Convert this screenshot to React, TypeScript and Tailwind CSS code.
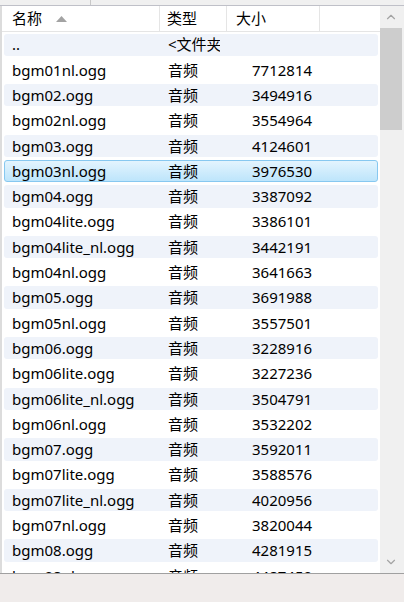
import { ChevronUp, ChevronDown } from 'lucide-react'

interface FileRow {
  name: string
  type: string
  size: string
}

const files: FileRow[] = [
  { name: '..', type: '<文件夹>', size: '' },
  { name: 'bgm01nl.ogg', type: '音频', size: '7712814' },
  { name: 'bgm02.ogg', type: '音频', size: '3494916' },
  { name: 'bgm02nl.ogg', type: '音频', size: '3554964' },
  { name: 'bgm03.ogg', type: '音频', size: '4124601' },
  { name: 'bgm03nl.ogg', type: '音频', size: '3976530' },
  { name: 'bgm04.ogg', type: '音频', size: '3387092' },
  { name: 'bgm04lite.ogg', type: '音频', size: '3386101' },
  { name: 'bgm04lite_nl.ogg', type: '音频', size: '3442191' },
  { name: 'bgm04nl.ogg', type: '音频', size: '3641663' },
  { name: 'bgm05.ogg', type: '音频', size: '3691988' },
  { name: 'bgm05nl.ogg', type: '音频', size: '3557501' },
  { name: 'bgm06.ogg', type: '音频', size: '3228916' },
  { name: 'bgm06lite.ogg', type: '音频', size: '3227236' },
  { name: 'bgm06lite_nl.ogg', type: '音频', size: '3504791' },
  { name: 'bgm06nl.ogg', type: '音频', size: '3532202' },
  { name: 'bgm07.ogg', type: '音频', size: '3592011' },
  { name: 'bgm07lite.ogg', type: '音频', size: '3588576' },
  { name: 'bgm07lite_nl.ogg', type: '音频', size: '4020956' },
  { name: 'bgm07nl.ogg', type: '音频', size: '3820044' },
  { name: 'bgm08.ogg', type: '音频', size: '4281915' },
  { name: 'bgm08nl.ogg', type: '音频', size: '4487450' },
]

const SELECTED = 5

const Row = ({ file, index }: { file: FileRow; index: number }) => {
  const selected = index === SELECTED
  const tinted = index % 2 === 0

  return (
    <div className="h-[25.3px] shrink-0 py-[1.5px] pl-[2px] pr-[2px]">
      <div
        className={`
          h-full flex items-center rounded-[3px] text-[15px] text-black
          ${selected
            ? 'bg-gradient-to-b from-[#e3f4fe] to-[#bde5fb] border border-[#87c8f0]'
            : tinted
              ? 'bg-[#eff3fa] border border-transparent'
              : 'border border-transparent'}
        `}
      >
        <div className="w-[157px] pl-[7px] whitespace-nowrap overflow-hidden">{file.name}</div>
        <div className="w-[58px] pl-[6px] whitespace-nowrap overflow-hidden">{file.type}</div>
        <div className="pl-[32px] whitespace-nowrap">{file.size}</div>
      </div>
    </div>
  )
}

export default function App() {
  return (
    <div
      className="w-[404px] h-[602px] flex flex-col overflow-hidden bg-white"
      style={{ fontFamily: '"Noto Sans", "Noto Sans CJK SC", sans-serif' }}
    >
      {/* top strip */}
      <div className="h-[6px] shrink-0 flex bg-[#f0f0f0] border-b border-[#bfc0c8]">
        <div className="w-[91px] border-r border-[#c8c8c8]" />
      </div>

      <div className="flex-1 flex min-h-0 border-l-2 border-[#dcdcdc]">
        {/* list */}
        <div className="w-[378px] flex flex-col min-h-0">
          {/* header */}
          <div className="h-[26px] shrink-0 flex items-stretch text-[15px] text-black border-b border-[#e5e5e5]">
            <div className="w-[158px] flex items-center pl-[10px] gap-[14px] border-r border-[#e5e5e5]">
              <span>名称</span>
              <svg width="11" height="6" viewBox="0 0 11 6">
                <path d="M0 6 L5.5 0 L11 6 Z" fill="#a3a3a3" />
              </svg>
            </div>
            <div className="w-[67px] flex items-center pl-[7px] border-r border-[#e5e5e5]">类型</div>
            <div className="w-[93px] flex items-center pl-[9px] border-r border-[#e5e5e5]">大小</div>
            <div className="flex-1" />
          </div>

          {/* rows */}
          <div className="flex-1 flex flex-col overflow-hidden">
            {files.map((f, i) => (
              <Row key={f.name} file={f} index={i} />
            ))}
          </div>
        </div>

        {/* scrollbar */}
        <div className="w-[22px] flex flex-col bg-[#f0f0f0]">
          <div className="h-[22px] flex items-center justify-center text-[#a3a3a3]">
            <ChevronUp size={14} strokeWidth={2} />
          </div>
          <div className="h-[102px] bg-[#cdcdcd]" />
          <div className="flex-1" />
          <div className="h-[22px] flex items-center justify-center text-[#a3a3a3]">
            <ChevronDown size={14} strokeWidth={2} />
          </div>
        </div>
        <div className="w-[2px] bg-[#f0f0f0]" />
      </div>

      {/* bottom band */}
      <div className="h-[29px] shrink-0 bg-[#f0eceb] border-t border-[#a0a0a0]" />
    </div>
  )
}
